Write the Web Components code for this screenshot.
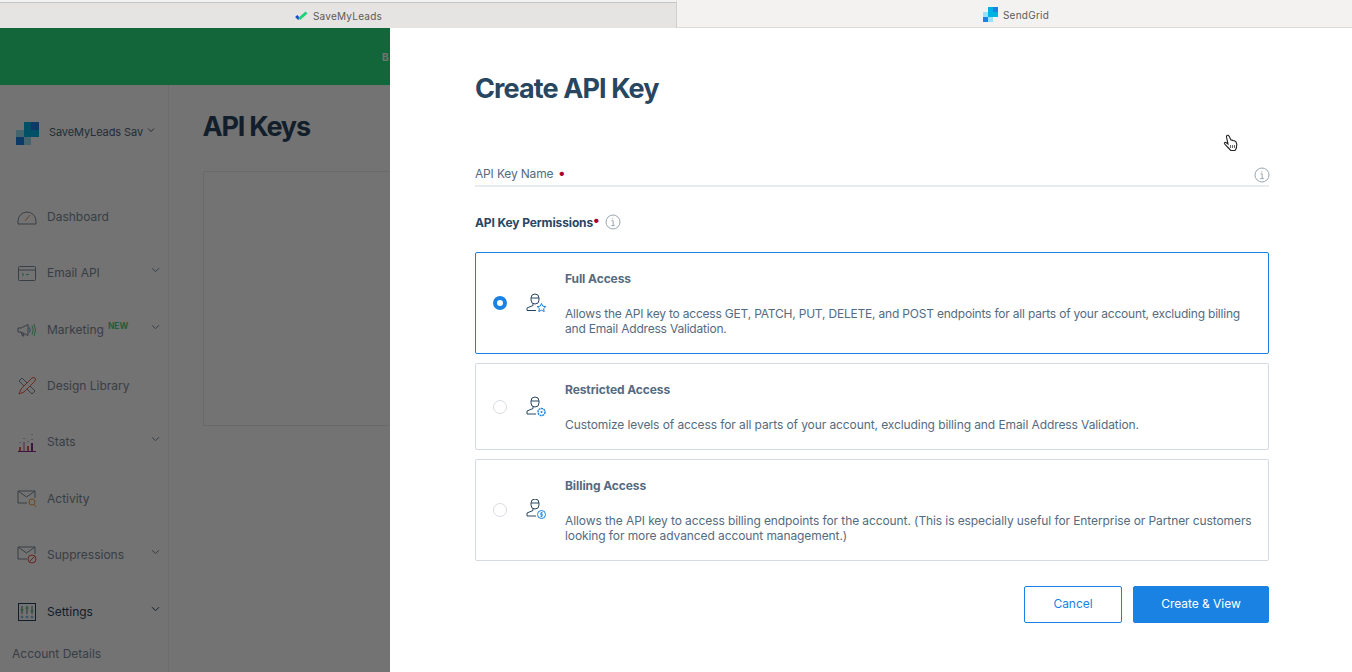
<!doctype html>
<html lang="en"><head><meta charset="utf-8"><title>SendGrid</title>
<style>
html,body{margin:0;height:672px;overflow:hidden;background:#fff;font-family:Inter,"Liberation Sans",sans-serif;color:#294661}
#root{display:flex;flex-direction:column;height:672px}
#main{display:flex;flex:1;min-height:0}
svg{display:block}
</style></head><body>
<template id="t-tabs"><style>
:host{display:grid;grid-template-columns:677px 1fr;height:28px;font:10px/1 Inter,"Liberation Sans",sans-serif;color:#5b5b5b;flex:none}
</style><slot></slot></template>
<template id="t-tab"><style>
:host{display:flex;align-items:center;justify-content:center;gap:5px;box-sizing:border-box;background:#f3f2f1;border-bottom:1px solid #dcdbda;padding-left:3px;padding-top:2px}
:host([inactive]){background:#e5e4e3;border-top:2px solid #f2f2f2;border-bottom:0;border-right:1px solid #cfcfcf;padding:2px 0 0 1px;box-shadow:inset 0 1px #c4c4c4;gap:5px}
::slotted(span){letter-spacing:.25px}
</style><slot></slot></template>

<template id="t-bg"><style>
:host{display:flex;flex-direction:column;position:relative;width:390px;flex:none;overflow:hidden;background:#fff}
.banner{height:57px;background:#2ce081;color:#fff;font:700 10px/1 Inter,sans-serif;flex:none;display:flex;align-items:center;padding-left:382px;box-sizing:border-box;white-space:nowrap}
.body{display:flex;flex:1;min-height:0}
aside{width:169px;flex:none;box-sizing:border-box;border-right:1px solid #eef0f2;display:flex;flex-direction:column;overflow:hidden}
.content{flex:1;padding:26px 0 0 33.500px;min-width:0}
h1{margin:0;font:700 27px/32px Inter,sans-serif;letter-spacing:-1.200px;color:#294661}
.panel{margin-top:28px;height:253px;border:1px solid #e9ecef;border-right:0;border-radius:2px}
.veil{position:absolute;inset:0;background:rgba(0,0,0,.55)}
</style>
<div class="banner">B</div>
<div class="body"><aside><slot></slot></aside><div class="content"><h1>API Keys</h1><div class="panel"></div></div></div>
<div class="veil"></div></template>

<template id="t-acct"><style>
:host{display:flex;align-items:center;height:56px;margin-top:20px;margin-bottom:27.500px;padding-left:16px;font:11px/1 Inter,sans-serif;color:#506478;flex:none;box-sizing:border-box}
.n{width:94px;margin:-2px 0 0 10px;overflow:hidden;white-space:nowrap;letter-spacing:-.1px}
svg{margin-top:-7px;margin-left:4px}
::slotted(svg){margin:0}
</style><slot></slot><span class="n">SaveMyLeads SaveMyLeads</span><svg width="8" height="6" viewBox="0 0 8 6"><path d="M1 1.500l3 3 3-3" fill="none" stroke="#506478" stroke-width="1"/></svg></template>

<template id="t-nav"><style>
:host{display:flex;align-items:center;height:56.450px;flex:none;padding-left:17px;font:12px/1 Inter,sans-serif;color:#7d8b99;box-sizing:border-box}
:host([active]){color:#294661}
.i{width:20px;height:20px;flex:none;margin-right:10px;display:flex;align-items:center;justify-content:center}
.new{font:700 8.500px/1 Inter,sans-serif;color:#4fcf8a;margin-left:4px;margin-top:-6px;display:none}
:host([new]) .new{display:inline}
.c{display:none;margin-left:auto;margin-right:8px;margin-top:-6px}
:host([chev]) .c{display:block}
</style><span class="i"><slot name="icon"></slot></span><slot></slot><span class="new">NEW</span><svg class="c" width="9" height="6" viewBox="0 0 9 6"><path d="M1 1.200l3.500 3.500L8 1.200" fill="none" stroke="currentColor" stroke-width="1"/></svg></template>

<template id="t-sub"><style>
:host{display:block;padding-left:12px;font:12px/1 Inter,sans-serif;color:#7d8b99;margin-top:8px;white-space:nowrap}
</style><slot></slot></template>

<template id="t-panel"><style>
:host{display:block;position:relative;flex:1;min-width:0;background:#fff;box-sizing:border-box;padding:42px 83px 0 85px;font:12px/15px Inter,"Liberation Sans",sans-serif;letter-spacing:-.093px;color:#546b81;overflow:hidden}
h1{margin:0;font:700 27px/38px Inter,sans-serif;letter-spacing:-.9px;color:#294661}
.field{display:flex;justify-content:space-between;align-items:center;margin-top:56px;height:23px;padding-bottom:2px;border-bottom:2px solid #e9ecef;box-sizing:border-box}
.l{letter-spacing:-.16px}
.dot{color:#a8002a;font-weight:700;font-size:14px;line-height:0;margin-left:2px}
.info{flex:none;margin-bottom:-3px;margin-right:-1px}
.perm{display:flex;align-items:center;gap:6px;margin-top:26px;height:18px;font-weight:700;font-size:12px;color:#294661;letter-spacing:-.12px}
.perm sup{font-size:14px;line-height:0;margin-left:-6px;color:#a8002a;position:relative;top:-2px;vertical-align:baseline}
.perm svg{margin-left:-1px}
.cards{display:flex;flex-direction:column;gap:9px;margin-top:21px}
.btns{display:flex;justify-content:flex-end;gap:11px;margin-top:25px}
.cur{position:absolute;left:833px;top:106px}
</style>
<h1>Create API Key</h1>
<div class="field"><span class="l">API Key Name <span class="dot">•</span></span><svg class="info" width="16" height="16" viewBox="0 0 16 16"><circle cx="8" cy="8" r="7" fill="none" stroke="#9aa5b0"/><path d="M6.500 6.800H8.200V11.600M6.300 11.600H9.800M7.800 4.300v1" fill="none" stroke="#9aa5b0"/></svg></div>
<div class="perm"><span>API Key Permissions</span><sup>•</sup><svg width="16" height="16" viewBox="0 0 16 16"><circle cx="8" cy="8" r="7" fill="none" stroke="#9aa5b0"/><path d="M6.500 6.800H8.200V11.600M6.300 11.600H9.800M7.800 4.300v1" fill="none" stroke="#9aa5b0"/></svg></div>
<div class="cards"><slot></slot></div>
<div class="btns"><slot name="btn"></slot></div>
<svg class="cur" width="16" height="19" viewBox="0 0 16 19"><path d="M4 1.500c.8-.6 1.600-.2 2 .6L8 6l1 .1 1 .5 1.500.2 1.500 1 .8 2.500-.5 4-1.300 2.200H7.800L5 13.500 1.500 9.800c-.5-1 .4-1.700 1.400-1.300L5 10 3.500 3.200c-.1-.7 0-1.300.5-1.700z" fill="#fff" stroke="#222" stroke-width="1.100"/><path d="M7.500 11v3M9.500 11v3M11.500 11v3" stroke="#666" stroke-width="1.100"/></svg>
</template>

<template id="t-card"><style>
:host{display:grid;grid-template-columns:14px 24px 1fr;align-items:center;box-sizing:border-box;border:1px solid #d5dae0;border-radius:2px;padding:17.500px 13px 17.500px 17px;background:#fff}
:host([selected]){border-color:#1a82e2}
.r{width:14px;height:14px;border-radius:50%;box-sizing:border-box;border:1px solid #d8dde2;background:#fff}
:host([selected]) .r{border:4.500px solid #1a82e2}
.i{margin-left:17px;width:24px;height:24px;display:flex;align-items:center;justify-content:center}
.t{margin-left:34px}
h3{margin:0 0 20px;font:700 12px/15px Inter,sans-serif;color:#546b81;letter-spacing:-.08px}
p{margin:0}
:host([selected]) p{letter-spacing:-.2px}
</style><span class="r"></span><span class="i"><slot name="icon"></slot></span><div class="t"><h3><slot name="title"></slot></h3><p><slot></slot></p></div></template>

<template id="t-btn"><style>
:host{display:flex;align-items:center;justify-content:center;box-sizing:border-box;height:37px;padding-bottom:2px;border:1px solid #1a82e2;border-radius:2px;font:12px/1 Inter,sans-serif;letter-spacing:-.05px;color:#1a82e2;background:#fff;width:98px}
:host([primary]){background:#1a82e2;color:#fff;width:136px}
</style><slot></slot></template>

<div id="root">
<app-tabs>
 <app-tab inactive><svg width="13" height="10" viewBox="0 0 13 10"><path d="M1.200 5l3 3" stroke="#2345d8" stroke-width="3" fill="none"/><path d="M4.200 8L11.500 1.500" stroke="#1fd07e" stroke-width="3" fill="none"/></svg><span>SaveMyLeads</span></app-tab>
 <app-tab><svg width="15" height="15" viewBox="0 0 15 15"><path fill="#99e1f4" d="M0 5h5v5H0zM5 10h5v5H5z"/><path fill="#1a82e2" d="M0 10h5v5H0zM10 0h5v5h-5z"/><path fill="#00b2e3" d="M5 0h5v5H5zM5 5h5v5H5zM10 5h5v5h-5z"/></svg><span>SendGrid</span></app-tab>
</app-tabs>
<div id="main">
<page-bg>
 <acct-row><svg width="23" height="23" viewBox="0 0 23 23"><path fill="#99e1f4" d="M0 8h8v8H0zM8 15h7v8H8z"/><path fill="#1a82e2" d="M0 15h8v8H0zM15 0h8v8h-8z"/><path fill="#00b2e3" d="M8 0h7v8H8zM15 8h8v7h-8zM8 8h7v7H8z"/></svg></acct-row>
 <nav-row><svg slot="icon" width="20" height="16" viewBox="0 0 20 16"><path d="M1 15v-3a9 9 0 0 1 18 0v3z" fill="none" stroke="#7d8b99"/><path d="M8 12l5-6" stroke="#f08a5d"/></svg>Dashboard</nav-row>
 <nav-row chev><svg slot="icon" width="18" height="15" viewBox="0 0 18 15"><rect x=".5" y=".5" width="17" height="14" rx="1" fill="none" stroke="#7d8b99"/><path d="M.5 4h17" stroke="#7d8b99"/><path d="M4 7l2 1.500-2 1.500M8 8.500h3" stroke="#4fcf8a" fill="none"/></svg>Email API</nav-row>
 <nav-row chev new><svg slot="icon" width="20" height="16" viewBox="0 0 20 16"><path d="M1 6v4h3l7 3.500V2.500L4 6zM4 10l1.500 4H7L6 10.800" fill="none" stroke="#7d8b99"/><path d="M12.500 5.500q1.500 2.500 0 5" stroke="#3c9fdc" fill="none"/><path d="M15 3.500q2.500 4.500 0 9" stroke="#4fcf8a" fill="none"/><path d="M17 2q3 6 0 12" stroke="#4fcf8a" fill="none"/></svg>Marketing</nav-row>
 <nav-row><svg slot="icon" width="20" height="20" viewBox="0 0 20 20"><path d="M2 5l3-3 13 13-3 3z" fill="none" stroke="#7d8b99"/><path d="M4 13L15 2q2-1 3 0t0 3L7 16l-5 2z" fill="#fff" stroke="#e8604c"/></svg>Design Library</nav-row>
 <nav-row chev><svg slot="icon" width="20" height="20" viewBox="0 0 20 20"><path d="M1 19.500h18" stroke="#8a2a8f"/><path d="M2 15h2v4H2zM10 14h2v5h-2z" fill="#e8604c"/><path d="M6 10h2v9H6z" fill="#d9a9d9"/><path d="M14 11h2v8h-2z" fill="#8a2a8f"/><path d="M3 10v1M7 6v1M11 9v1M15 7v1M15 2v1" stroke="#7d8b99"/></svg>Stats</nav-row>
 <nav-row><svg slot="icon" width="20" height="18" viewBox="0 0 20 18"><path d="M10 13H1V1h17v7M1 1l8.500 6L18 1" fill="none" stroke="#7d8b99"/><circle cx="15" cy="12" r="3" fill="none" stroke="#f0a040"/><path d="M17 14.500l2 2.500" stroke="#f0a040"/></svg>Activity</nav-row>
 <nav-row chev><svg slot="icon" width="20" height="18" viewBox="0 0 20 18"><path d="M10 13H1V1h17v7M1 1l8.500 6L18 1" fill="none" stroke="#7d8b99"/><circle cx="15" cy="13" r="4" fill="#fff" stroke="#e8504c"/><path d="M12.500 15.500l5-5" stroke="#e8504c"/></svg>Suppressions</nav-row>
 <nav-row chev active><svg slot="icon" width="18" height="18" viewBox="0 0 18 18"><rect x=".5" y=".5" width="17" height="17" fill="none" stroke="#294661"/><path d="M4 3v8M9 3v8M14 3v8" stroke="#294661" stroke-width=".8"/><path d="M2.500 7h3M7.500 5h3M12.500 8h3" stroke="#4fd07a" stroke-width="1.500"/><circle cx="4" cy="14" r="1" fill="none" stroke="#3c9fdc" stroke-width=".8"/><circle cx="9" cy="14" r="1" fill="none" stroke="#3c9fdc" stroke-width=".8"/><circle cx="14" cy="14" r="1" fill="none" stroke="#3c9fdc" stroke-width=".8"/></svg>Settings</nav-row>
 <sub-row>Account Details</sub-row>
</page-bg>
<create-panel>
 <perm-card selected>
  <svg slot="icon" width="22" height="22" viewBox="0 0 22 22"><g fill="none" stroke="#294661"><path d="M6 6a4 4 0 0 1 8 0v2a4 4 0 0 1-8 0zM6 6h8M8 11.500v2L2 16v2.500h9"/></g><path d="M16.500 11.500l1.300 2.700 3 .4-2.200 2 .6 3-2.700-1.500-2.700 1.500.6-3-2.200-2 3-.4z" fill="#fff" stroke="#1a82e2"/></svg>
  <span slot="title">Full Access</span>Allows the API key to access GET, PATCH, PUT, DELETE, and POST endpoints for all parts of your account, excluding billing and Email Address Validation.</perm-card>
 <perm-card>
  <svg slot="icon" width="22" height="22" viewBox="0 0 22 22"><g fill="none" stroke="#294661"><path d="M6 5a4 4 0 0 1 8 0v2a4 4 0 0 1-8 0zM6 5h8M8 10.500v2L2 15v3h9"/></g><circle cx="16.500" cy="16" r="3.500" fill="#fff" stroke="#1a82e2" stroke-width="1.500" stroke-dasharray="2 .6"/><circle cx="16.500" cy="16" r="1" fill="#1a82e2"/></svg>
  <span slot="title">Restricted Access</span>Customize levels of access for all parts of your account, excluding billing and Email Address Validation.</perm-card>
 <perm-card>
  <svg slot="icon" width="22" height="22" viewBox="0 0 22 22"><g fill="none" stroke="#294661"><path d="M6 4a4 4 0 0 1 8 0v2a4 4 0 0 1-8 0zM6 4h8M8 9.500v2L2 14v3h9"/></g><circle cx="16.500" cy="15.500" r="4" fill="#fff" stroke="#1a82e2"/><path d="M17.800 13.800h-2l-.3 1.700h2l-.3 1.800h-2M16.500 12.800v5.500" stroke="#1a82e2" stroke-width=".7" fill="none"/></svg>
  <span slot="title">Billing Access</span>Allows the API key to access billing endpoints for the account. (This is especially useful for Enterprise or Partner customers looking for more advanced account management.)</perm-card>
 <app-btn slot="btn">Cancel</app-btn>
 <app-btn slot="btn" primary>Create &amp; View</app-btn>
</create-panel>
</div></div>
<script>
const reg=(name,tid)=>customElements.define(name,class extends HTMLElement{constructor(){super();this.attachShadow({mode:'open'}).appendChild(document.getElementById(tid).content.cloneNode(true))}});
[['app-tabs','t-tabs'],['app-tab','t-tab'],['page-bg','t-bg'],['acct-row','t-acct'],['nav-row','t-nav'],['sub-row','t-sub'],['create-panel','t-panel'],['perm-card','t-card'],['app-btn','t-btn']].forEach(a=>reg(...a));
</script>
</body></html>
